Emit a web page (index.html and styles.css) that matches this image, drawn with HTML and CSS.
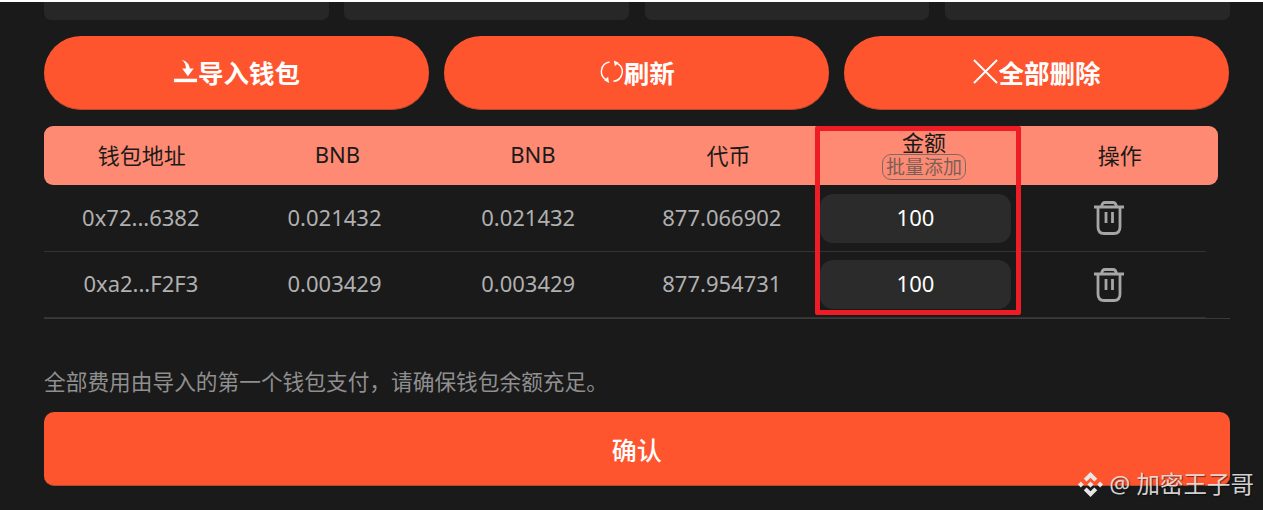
FILE: index.html
```html
<!DOCTYPE html>
<html lang="zh-CN">
<head>
  <meta charset="UTF-8">
  <meta name="viewport" content="width=device-width, initial-scale=1.0">
  <title>批量钱包</title>
  <link rel="stylesheet" href="styles.css">
</head>
<body>
  <div class="page">
    <!-- 上方被截断的输入框 -->
    <div class="stubs">
      <div class="stub"></div>
      <div class="stub"></div>
      <div class="stub"></div>
      <div class="stub"></div>
    </div>

    <div class="actions">
      <button class="btn-pill" type="button">
        <svg class="btn-icon" viewBox="0 0 26 26" aria-hidden="true">
          <path d="M9 1 C14 2 17 5 17.5 10 L21.5 10 L15.5 18 L9.5 10 L13.5 10 C13.5 6 12 3 9 1 Z" fill="#fff"/>
          <rect x="1" y="20.5" width="24" height="3.6" fill="#fff"/>
        </svg>导入钱包
      </button>
      <button class="btn-pill" type="button">
        <svg class="btn-icon" viewBox="0 0 26 26" aria-hidden="true">
          <path d="M11 3.2 A10 10 0 0 0 8 22 M15 23.2 A10 10 0 0 0 19 4.5" fill="none" stroke="#fff" stroke-width="1.5"/>
          <path d="M15.5 1.5 L20.5 4 L16.5 7.5 Z M10.5 25 L5.5 22 L9.5 18.5 Z" fill="#fff"/>
        </svg>刷新
      </button>
      <button class="btn-pill" type="button">
        <svg class="btn-icon" viewBox="0 0 26 26" aria-hidden="true">
          <path d="M1 1 L25 25 M25 1 L1 25" fill="none" stroke="#fff" stroke-width="2"/>
        </svg>全部删除
      </button>
    </div>

    <div class="wallets">
      <div class="wallets-head">
        <div class="head-cell">钱包地址</div>
        <div class="head-cell">BNB</div>
        <div class="head-cell">BNB</div>
        <div class="head-cell">代币</div>
        <div class="head-cell head-amount">
          <span class="head-amount-title">金额</span>
          <span class="batch-add">批量添加</span>
        </div>
        <div class="head-cell">操作</div>
      </div>

      <div class="wallet-row">
        <div class="cell">0x72...6382</div>
        <div class="cell">0.021432</div>
        <div class="cell">0.021432</div>
        <div class="cell">877.066902</div>
        <div class="cell cell-amount"><div class="amount-input">100</div></div>
        <div class="cell cell-action">
          <svg class="trash" viewBox="0 0 32 34" aria-hidden="true">
            <path d="M1 6 H31 M8.5 6 Q9 1.5 12 1.5 H20 Q23 1.5 23.5 6 M5 6 V26 Q5 32.5 11 32.5 H21 Q27 32.5 27 26 V6 M13 11 V22 M19.5 11 V22" fill="none" stroke="#a6a6a6" stroke-width="2.8"/>
          </svg>
        </div>
      </div>
      <div class="wallet-row">
        <div class="cell">0xa2...F2F3</div>
        <div class="cell">0.003429</div>
        <div class="cell">0.003429</div>
        <div class="cell">877.954731</div>
        <div class="cell cell-amount"><div class="amount-input">100</div></div>
        <div class="cell cell-action">
          <svg class="trash" viewBox="0 0 32 34" aria-hidden="true">
            <path d="M1 6 H31 M8.5 6 Q9 1.5 12 1.5 H20 Q23 1.5 23.5 6 M5 6 V26 Q5 32.5 11 32.5 H21 Q27 32.5 27 26 V6 M13 11 V22 M19.5 11 V22" fill="none" stroke="#a6a6a6" stroke-width="2.8"/>
          </svg>
        </div>
      </div>

      <!-- 红色标注框 -->
      <div class="highlight"></div>
    </div>

    <p class="note">全部费用由导入的第一个钱包支付&#xFF0C;请确保钱包余额充足。</p>
    <button class="btn-confirm" type="button">确认</button>
  </div>

  <!-- 水印 -->
  <div class="watermark">
    <svg class="watermark-logo" viewBox="0 0 28 28" aria-hidden="true">
      <path d="M14 1 L21 8 L18 11 L14 7 L10 11 L7 8 Z M14 27 L21 20 L18 17 L14 21 L10 17 L7 20 Z M4 11 L7 14 L4 17 L1 14 Z M24 11 L27 14 L24 17 L21 14 Z M14 10.8 L17.2 14 L14 17.2 L10.8 14 Z" fill="#e6e6e6"/>
    </svg>
    <span>@ 加密王子哥</span>
  </div>
</body>
</html>
```

FILE: styles.css
```css
* {
  box-sizing: border-box;
}

html, body {
  margin: 0;
  height: 100%;
  overflow: hidden;
}

body {
  background: #1a1a1a;
  border-top: 2px solid #ffffff;
  font-family: "Noto Sans", "Noto Sans CJK SC", sans-serif;
  position: relative;
}

.page {
  width: 1229.5px;
  padding-left: 44px;
}

.stubs {
  display: grid;
  grid-template-columns: repeat(4, 1fr);
  gap: 15.5px;
  height: 18px;
}

.stub {
  background: #272727;
  border-radius: 0 0 7px 7px;
}

/* Botones */
.actions {
  display: grid;
  grid-template-columns: repeat(3, 1fr);
  gap: 15px;
  margin-top: 16px;
}

.btn-pill {
  display: flex;
  align-items: center;
  justify-content: center;
  height: 74px;
  padding: 0 0 2px;
  background: #ff552e;
  border: none;
  border-bottom: 1px solid #b84a2e;
  border-radius: 37px;
  color: #ffffff;
  font-family: inherit;
  font-size: 25.5px;
  font-weight: 700;
}

.btn-icon {
  width: 25px;
  height: 25px;
}

/* Tabla */
.wallets {
  position: relative;
  margin-top: 16px;
  border-bottom: 1px solid #3a3a3a;
}

.wallets-head {
  display: grid;
  grid-template-columns: repeat(6, 1fr);
  width: 1173.5px;
  height: 59px;
  background: #ff8a73;
  border-radius: 9px;
}

.head-cell {
  display: flex;
  flex-direction: column;
  align-items: center;
  justify-content: center;
  padding-bottom: 4px;
  color: #1a1a1a;
  font-size: 22px;
}

.head-cell.head-amount {
  padding-bottom: 1px;
}

.head-amount-title {
  line-height: 24px;
}

.batch-add {
  padding: 0 3px;
  border: 1px solid #7d6a64;
  border-radius: 9px;
  color: #7a6058;
  font-size: 19px;
  line-height: 24px;
}

.wallet-row {
  display: grid;
  grid-template-columns: repeat(6, 1fr);
  align-items: center;
  width: 1162px;
  height: 66.5px;
  border-bottom: 1px solid #333333;
}

.wallet-row:last-of-type {
  border-bottom-color: #3a3a3a;
}

.cell {
  display: flex;
  justify-content: center;
  padding-bottom: 2px;
  color: #b0b0b0;
  font-size: 22px;
}

.cell.cell-amount {
  padding: 1px 0 0;
}

.cell.cell-action {
  padding: 1px 0 0;
}

.amount-input {
  width: 191px;
  height: 49px;
  padding-bottom: 3px;
  display: flex;
  align-items: center;
  justify-content: center;
  background: #2b2b2b;
  border-radius: 13px;
  color: #ffffff;
}

.trash {
  width: 32px;
  height: 34px;
}

.highlight {
  position: absolute;
  left: 771px;
  top: 0;
  width: 206px;
  height: 189px;
  border: 5px solid #ee1c25;
  border-radius: 2px;
  pointer-events: none;
}

.note {
  margin: 49px 0 0;
  color: #8f8f8f;
  font-size: 21.7px;
  line-height: 28px;
}

.btn-confirm {
  display: block;
  width: 100%;
  height: 74px;
  margin-top: 16px;
  background: #ff552e;
  border: none;
  border-bottom: 1px solid #b84a2e;
  border-radius: 10px;
  color: #ffffff;
  font-family: inherit;
  font-size: 25px;
  font-weight: 500;
}

.watermark {
  position: absolute;
  right: 9px;
  top: 467px;
  display: flex;
  align-items: center;
  gap: 5px;
  color: rgba(235, 235, 235, 0.88);
  font-size: 23.5px;
  line-height: 30px;
  text-shadow: 1px 1px 1px rgba(0, 0, 0, 0.5);
}

.watermark-logo {
  width: 27px;
  height: 27px;
}
```
